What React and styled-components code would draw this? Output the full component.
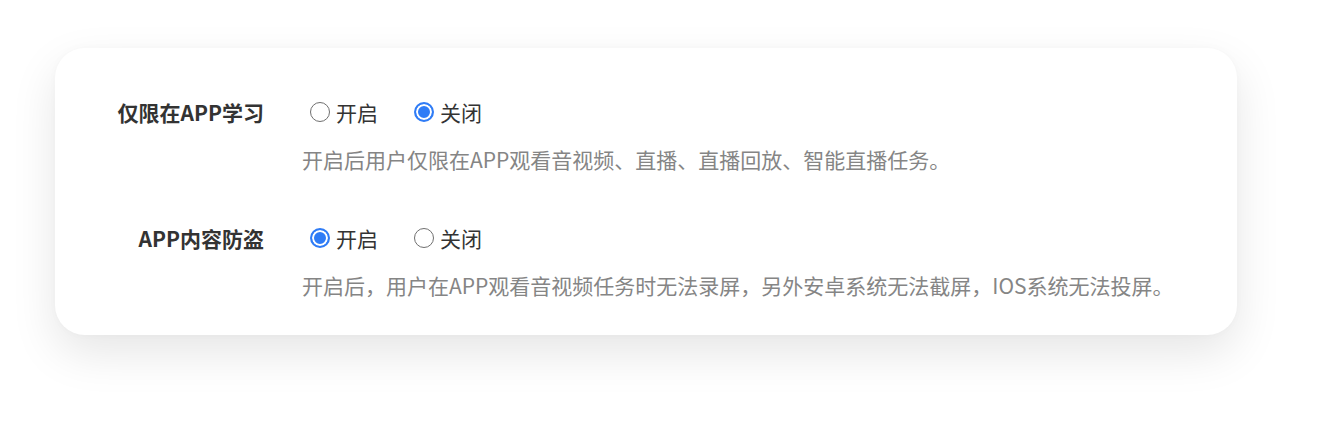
import React, { useState } from 'react';
import styled, { createGlobalStyle } from 'styled-components';

const GlobalStyle = createGlobalStyle`
  html, body {
    margin: 0;
    padding: 0;
    background: #ffffff;
    font-family: "Noto Sans CJK SC", "Noto Sans", sans-serif;
  }
`;

const Page = styled.div`
  box-sizing: border-box;
  min-height: 431px;
  padding: 48px 90px 0 55px;
`;

const Card = styled.div`
  width: 1182px;
  box-sizing: border-box;
  padding: 50px 0 36px;
  border-radius: 30px;
  background: #fff;
  box-shadow: 0 18px 46px rgba(0, 0, 0, 0.1), 0 0 8px rgba(0, 0, 0, 0.025);
`;

const Row = styled.div`
  display: grid;
  grid-template-columns: 209px 1fr;
  column-gap: 38px;
  & + & {
    margin-top: 51px;
  }
`;

const Label = styled.div`
  text-align: right;
  font-size: 21px;
  line-height: 28px;
  font-weight: 700;
  color: #333;
`;

const Body = styled.div`
  display: flex;
  flex-direction: column;
`;

const Group = styled.div`
  display: flex;
  align-items: center;
  height: 28px;
  gap: 28px;
`;

const Option = styled.label`
  display: flex;
  align-items: center;
  gap: 6px;
  font-size: 21px;
  line-height: 28px;
  color: #333;
  cursor: pointer;
`;

const Dot = styled.span`
  width: 20px;
  height: 20px;
  margin-left: 8px;
  box-sizing: border-box;
  border-radius: 50%;
  border: ${(p) => (p.$on ? '2px solid #2f7cf6' : '1px solid #6f6f6f')};
  background: ${(p) => (p.$on ? '#2f7cf6' : '#fff')};
  box-shadow: ${(p) => (p.$on ? 'inset 0 0 0 2px #fff' : 'none')};
`;

const Desc = styled.div`
  margin-top: 19px;
  font-size: 21px;
  line-height: 28px;
  color: #858585;
`;

const Setting = ({ label, value, onChange, desc }) => (
  <Row>
    <Label>{label}</Label>
    <Body>
      <Group>
        {['开启', '关闭'].map((t) => (
          <Option key={t} onClick={() => onChange(t)}>
            <Dot $on={value === t} />
            {t}
          </Option>
        ))}
      </Group>
      <Desc>{desc}</Desc>
    </Body>
  </Row>
);

export default function App() {
  const [appOnly, setAppOnly] = useState('关闭');
  const [guard, setGuard] = useState('开启');
  return (
    <Page>
      <GlobalStyle />
      <Card>
        <Setting
          label="仅限在APP学习"
          value={appOnly}
          onChange={setAppOnly}
          desc="开启后用户仅限在APP观看音视频、直播、直播回放、智能直播任务。"
        />
        <Setting
          label="APP内容防盗"
          value={guard}
          onChange={setGuard}
          desc="开启后，用户在APP观看音视频任务时无法录屏，另外安卓系统无法截屏，IOS系统无法投屏。"
        />
      </Card>
    </Page>
  );
}
